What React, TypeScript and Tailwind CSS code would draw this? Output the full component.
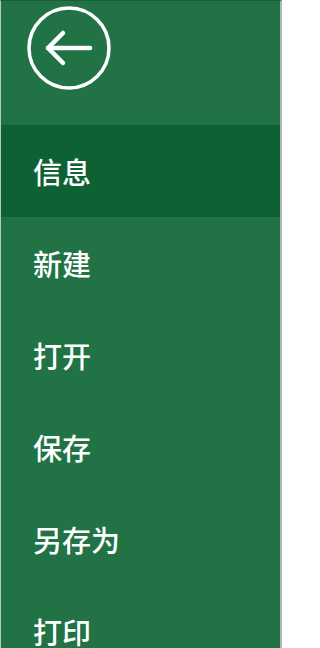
import React from 'react';

const items = ['信息', '新建', '打开', '保存', '另存为', '打印'];

const BackIcon = () => (
  <svg width="86" height="86" viewBox="0 0 86 86" fill="none">
    <circle cx="43" cy="43" r="40" stroke="white" strokeWidth="3.5" />
    <path d="M22 43 H64" stroke="white" strokeWidth="4.5" strokeLinecap="round" />
    <path d="M37 28 L22 43 L37 58" stroke="white" strokeWidth="4.5" strokeLinecap="round" strokeLinejoin="round" />
  </svg>
);

export default function App() {
  return (
    <div
      className="h-[648px] w-[282px] overflow-hidden bg-[#217346] border-t border-t-[#1a5e39] border-l border-l-[#b9c9bf] border-r-2 border-r-[#a9bdb1] flex flex-col"
      style={{ fontFamily: '"Noto Sans CJK SC", "Noto Sans", sans-serif' }}
    >
      <div className="h-[124px] shrink-0 flex items-start pl-[25px] pt-[4px]">
        <BackIcon />
      </div>
      {items.map((label, i) => (
        <div
          key={label}
          className={`h-[92px] shrink-0 flex items-center pl-[32px] text-[29px] font-medium leading-none text-white ${i === 0 ? 'bg-[#0d6133]' : ''}`}
        >
          {label}
        </div>
      ))}
    </div>
  );
}
